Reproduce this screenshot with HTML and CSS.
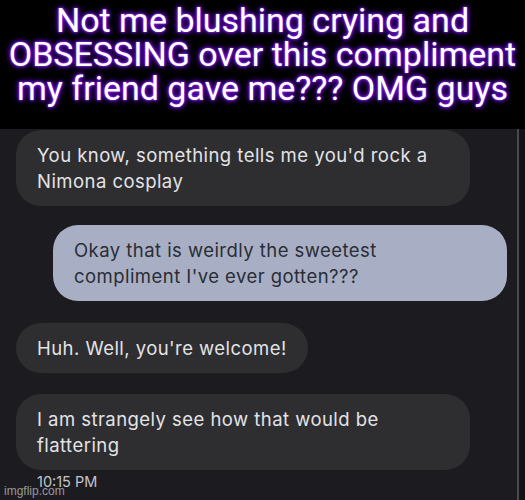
FILE: index.html
```html
<!DOCTYPE html>
<html lang="en">
<head>
    <meta charset="UTF-8">
    <meta name="viewport" content="width=device-width, initial-scale=1.0">
    <title>Compliment meme</title>
    <link rel="stylesheet" href="styles.css">
</head>
<body>
    <div class="meme">
        <div class="caption">
            Not me blushing crying and<br>
            OBSESSING over this compliment<br>
            my friend gave me??? OMG guys
        </div>

        <div class="chat">
            <div class="chat-inner">
                <div class="bubble received wide">You know, something tells me you'd rock a<br>Nimona cosplay</div>
                <div class="bubble sent">Okay that is weirdly the sweetest<br>compliment I've ever gotten???</div>
                <div class="bubble received">Huh. Well, you're welcome!</div>
                <div class="bubble received wide">I am strangely see how that would be<br>flattering</div>
                <div class="time">10:15 PM</div>
            </div>
        </div>

        <span class="watermark">imgflip.com</span>
    </div>
</body>
</html>
```

FILE: styles.css
```css
body {
    margin: 0;
    background-color: #000;
}
.meme {
    position: relative;
    width: 525px;
    height: 500px;
    overflow: hidden;
    background-color: #000;
}
.caption {
    height: 129px;
    padding-top: 3px;
    box-sizing: border-box;
    text-align: center;
    font-family: Roboto, "Liberation Sans", sans-serif;
    font-size: 34px;
    line-height: 34px;
    color: #fff;
    text-shadow: 0 0 2px #8a2be2, 0 0 3px #7b1fe0, 0 0 5px #6a0dd8, 0 0 7px #5a00c0;
}
.chat {
    height: 371px;
    background-color: #131216;
}
.chat-inner {
    height: 100%;
    width: 519px;
    box-sizing: border-box;
    border-right: 2px solid #4b4a50;
    background-color: #1c1b20;
    padding: 1px 0 0 16px;
    display: flex;
    flex-direction: column;
    align-items: flex-start;
    font-family: Inter, Roboto, sans-serif;
    font-size: 18.5px;
    letter-spacing: 0.45px;
}
.bubble {
    border-radius: 25px;
    padding: 12px 21px;
    line-height: 26px;
    box-sizing: border-box;
}
.received {
    background-color: #2e2e31;
    color: #e3e3e6;
}
.wide {
    width: 454px;
}
.sent {
    align-self: flex-end;
    margin-right: 10px;
    margin-top: 19px;
    width: 454px;
    background-color: #a8afc4;
    color: #2a2d35;
}
.received + .received {
    margin-top: 21px;
}
.sent + .received {
    margin-top: 22px;
}
.time {
    margin: 3px 0 0 21px;
    font-size: 14.5px;
    letter-spacing: 0;
    color: #c4c4c8;
}
.watermark {
    position: absolute;
    left: 4px;
    bottom: 2px;
    font-family: "Liberation Sans", Arial, sans-serif;
    font-size: 12px;
    color: rgba(255, 255, 255, 0.55);
}
```
